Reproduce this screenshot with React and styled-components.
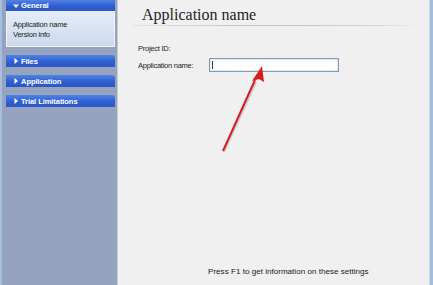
import React from "react";
import styled, { createGlobalStyle } from "styled-components";

const Global = createGlobalStyle`
  html, body { margin: 0; padding: 0; }
  body { width: 433px; height: 285px; overflow: hidden; background: #f0f0f0; }
`;

const Window = styled.div`
  display: flex;
  width: 433px;
  height: 285px;
  font-family: Tahoma, "DejaVu Sans", "Liberation Sans", sans-serif;
`;

const Sidebar = styled.div`
  width: 109px;
  flex: none;
  background: #95a3bf;
  border-left: 2px solid #a7bfdf;
  border-right: 1px solid #c9ccd2;
  padding: 0 2px 0 4px;
  display: flex;
  flex-direction: column;
  gap: 8px;
`;

const Panel = styled.div`
  display: flex;
  flex-direction: column;
`;

const Header = styled.div`
  height: ${(p) => p.$h || 12}px;
  display: flex;
  align-items: center;
  gap: 2px;
  padding-left: 7px;
  border-radius: ${(p) => (p.$cut ? "0" : "0 3px 0 0")};
  background: linear-gradient(#4f82e6, #2f5fd0 55%, #2a57c4);
  color: #fff;
  font-family: "Liberation Sans", Arial, sans-serif;
  font-weight: bold;
  font-size: 7.6px;
  letter-spacing: -0.1px;
`;

const Tri = styled.svg`
  width: 6px;
  height: 6px;
  flex: none;
`;

const PanelBody = styled.div`
  height: 36px;
  background: linear-gradient(#e6edf8, #ccd9ee);
  border: 1px solid #f2f6fc;
  border-top: none;
  padding: 9px 0 0 6px;
  box-sizing: border-box;
  display: flex;
  flex-direction: column;
  gap: 1px;
  font-family: "Liberation Sans", Arial, sans-serif;
  font-size: 7.5px;
  color: #1a1a1a;
  letter-spacing: -0.2px;
`;

const Content = styled.div`
  flex: 1;
  position: relative;
  background: #f0f0f0;
  display: flex;
  flex-direction: column;
`;

const RightEdge = styled.div`
  width: 3px;
  flex: none;
  background: #a3bddd;
  border-left: 1px solid #d0d8e2;
`;

const TitleWrap = styled.div`
  margin: 5px 10px 0 15px;
  padding: 1px 0 2px 9px;
  border-bottom: 1px solid transparent;
  border-image: linear-gradient(90deg, #e4e4e4, #c2c2c2 40%, #cfcfcf 80%, #f0f0f0) 1;
`;

const Title = styled.div`
  font-family: "Liberation Serif", "Times New Roman", serif;
  font-size: 16px;
  color: #1e1e1e;
  line-height: 17px;
`;

const Form = styled.div`
  margin: 16px 0 0 20px;
  display: flex;
  flex-direction: column;
  gap: 4px;
`;

const Row = styled.div`
  display: flex;
  align-items: center;
  height: ${(p) => p.$h || 12}px;
`;

const Label = styled.div`
  width: 71px;
  font-family: "Liberation Sans", Arial, sans-serif;
  font-size: 7.5px;
  color: #222;
  letter-spacing: -0.25px;
`;

const Input = styled.div`
  width: 126px;
  height: 12px;
  background: #fff;
  border: 1px solid #7f9db9;
  box-shadow: inset 0 0 0 1px #dfe8f3;
  display: flex;
  align-items: center;
  padding-left: 2px;
`;

const Caret = styled.span`
  width: 1px;
  height: 8px;
  background: #333;
`;

const Footer = styled.div`
  margin-top: auto;
  margin-bottom: 9px;
  padding-left: 90px;
  font-family: "Liberation Sans", Arial, sans-serif;
  font-size: 8.1px;
  color: #222;
  letter-spacing: 0;
`;

const ArrowSvg = styled.svg`
  position: absolute;
  left: 0;
  top: 0;
  width: 311px;
  height: 285px;
  pointer-events: none;
`;

const Down = () => (
  <Tri viewBox="0 0 6 6"><path d="M0 1.5h6L3 5z" fill="#fff" /></Tri>
);
const Right = () => (
  <Tri viewBox="0 0 6 6"><path d="M1.5 0v6L5 3z" fill="#fff" /></Tri>
);

export default function App() {
  return (
    <>
      <Global />
      <Window>
        <Sidebar>
          <Panel>
            <Header $h={11} $cut><Down />General</Header>
            <PanelBody>
              <div>Application name</div>
              <div>Version info</div>
            </PanelBody>
          </Panel>
          <Header><Right />Files</Header>
          <Header><Right />Application</Header>
          <Header><Right />Trial Limitations</Header>
        </Sidebar>
        <Content>
          <TitleWrap>
            <Title>Application name</Title>
          </TitleWrap>
          <Form>
            <Row><Label>Project ID:</Label></Row>
            <Row $h={14}>
              <Label>Application name:</Label>
              <Input><Caret /></Input>
            </Row>
          </Form>
          <Footer>Press F1 to get information on these settings</Footer>
          <ArrowSvg viewBox="0 0 311 285">
            <g transform="translate(-118 0)">
              <line x1="224" y1="152" x2="256" y2="82" stroke="#888" strokeWidth="2" opacity="0.35" />
              <line x1="223" y1="151" x2="255" y2="80" stroke="#d61d1d" strokeWidth="2" />
              <path d="M262 66 L264 82 L259 79 L252 81 Z" fill="#d61d1d" />
            </g>
          </ArrowSvg>
        </Content>
        <RightEdge />
      </Window>
    </>
  );
}
